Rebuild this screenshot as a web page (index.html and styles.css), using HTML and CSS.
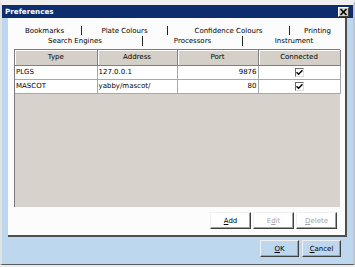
FILE: index.html
```html
<!DOCTYPE html>
<html>
<head>
<meta charset="utf-8">
<link rel="stylesheet" href="styles.css">
</head>
<body>
<div class="win">
  <div class="title">
    <span class="title-text">Preferences</span>
    <span class="close"><svg width="9" height="8" viewBox="0 0 9 8"><path d="M1.5 1 L7.5 7 M7.5 1 L1.5 7" stroke="#000" stroke-width="1.6"/></svg></span>
  </div>
  <div class="client">
    <div class="tabctl">
      <div class="tabrow">
        <div class="tab t-bm">Bookmarks</div>
        <div class="tab t-pc">Plate Colours</div>
        <div class="tab t-cc">Confidence Colours</div>
        <div class="tab t-pr last">Printing</div>
      </div>
      <div class="tabrow">
        <div class="tab t-se">Search Engines</div>
        <div class="tab t-proc">Processors</div>
        <div class="tab t-in last">Instrument</div>
      </div>
      <div class="page">
        <div class="grid">
          <table>
            <thead>
              <tr><th class="c1">Type</th><th class="c2">Address</th><th class="c3">Port</th><th class="c4">Connected</th></tr>
            </thead>
            <tbody>
              <tr><td>PLGS</td><td>127.0.0.1</td><td class="num">9876</td><td class="chk"><span class="cb"><svg width="7" height="7" viewBox="0 0 7 7"><path d="M0.5 3.2 L2.6 5.3 L6.5 1.2" fill="none" stroke="#000" stroke-width="1.5"/></svg></span></td></tr>
              <tr><td>MASCOT</td><td>yabby/mascot/</td><td class="num">80</td><td class="chk"><span class="cb"><svg width="7" height="7" viewBox="0 0 7 7"><path d="M0.5 3.2 L2.6 5.3 L6.5 1.2" fill="none" stroke="#000" stroke-width="1.5"/></svg></span></td></tr>
            </tbody>
          </table>
        </div>
        <div class="btnrow">
          <button class="btn"><u>A</u>dd</button>
          <button class="btn disabled">E<u>d</u>it</button>
          <button class="btn disabled"><u>D</u>elete</button>
        </div>
      </div>
    </div>
    <div class="dlgrow">
      <button class="btn blue"><u>O</u>K</button>
      <button class="btn blue"><u>C</u>ancel</button>
    </div>
  </div>
</div>
</body>
</html>
```

FILE: styles.css
```css
* { box-sizing: border-box; }
html, body { margin: 0; padding: 0; }
body {
  width: 355px;
  height: 267px;
  background: #ececec;
  font-family: "DejaVu Sans", "Liberation Sans", sans-serif;
  font-size: 7px;
  color: #000;
  overflow: hidden;
}
.win {
  width: 355px;
  height: 265px;
  background: #bdd7ef;
  border-top: 5px solid #efefef;
  border-left: 2px solid #e2e2e2;
  border-right: 2px solid #c4c4c4;
  border-bottom: 1px solid #5c5c5c;
  display: flex;
  flex-direction: column;
}
.title {
  height: 13px;
  background: #0e2d6e;
  display: flex;
  align-items: center;
  justify-content: space-between;
  padding: 0 4px 0 3px;
}
.title-text {
  color: #fff;
  font-weight: bold;
  font-size: 7.2px;
}
.close {
  width: 11px;
  height: 10px;
  background: #d4d0c8;
  border: 1px solid;
  border-color: #fff #404040 #404040 #fff;
  display: flex;
  align-items: center;
  justify-content: center;
}
.client {
  flex: 1;
  padding: 0 6px;
  display: flex;
  flex-direction: column;
}
.tabctl {
  height: 219px;
  background: #fcfcfc;
  border-right: 2px solid #4e4e4e;
  border-bottom: 2px solid #4e4e4e;
  padding-top: 8px;
  display: flex;
  flex-direction: column;
}
.tabrow {
  display: flex;
  height: 10px;
}
.tab {
  height: 9px;
  line-height: 10px;
  text-align: center;
  border-right: 1px solid #222;
  white-space: nowrap;
}
.tab.last { border-right: none; }
.t-bm { width: 74px; }
.t-pc { width: 86px; }
.t-cc { width: 122px; }
.t-pr { width: 55px; }
.t-se { width: 135px; }
.t-proc { width: 100px; }
.t-in { width: 102px; }
.tabrow + .tabrow .tab { height: 10px; }
.page {
  padding: 3px 0 0 6px;
  display: flex;
  flex-direction: column;
}
.grid {
  width: 326px;
  height: 158px;
  background: #d7d3cc;
  border-top: 1px solid #7a7a7a;
  border-left: 1px solid #7a7a7a;
}
table {
  border-collapse: collapse;
  table-layout: fixed;
  width: 325px;
}
th {
  height: 15px;
  padding: 0;
  font-weight: normal;
  background: #d4d0c8;
  border-right: 1px solid #808080;
  border-bottom: 1px solid #808080;
  box-shadow: inset 1px 1px 0 #fff;
  text-align: center;
}
.c1 { width: 82px; }
.c2 { width: 80px; }
.c3 { width: 81px; }
.c4 { width: 82px; }
td {
  height: 14px;
  padding: 0 1px;
  background: #fff;
  border: 1px solid #a8a8a8;
  border-top: none;
  white-space: nowrap;
  overflow: hidden;
}
td:first-child { border-left: none; }
td.num { text-align: right; }
td.chk { text-align: center; }
.cb {
  display: inline-flex;
  width: 9px;
  height: 9px;
  vertical-align: middle;
  background: #fff;
  border: 1px solid;
  border-color: #6a6a6a #e0e0e0 #e0e0e0 #6a6a6a;
  align-items: center;
  justify-content: center;
}
.btnrow {
  display: flex;
  justify-content: flex-end;
  gap: 2px;
  margin-top: 5px;
  padding-right: 8px;
}
.btn {
  width: 41px;
  height: 17px;
  padding: 0;
  font-family: inherit;
  font-size: 7px;
  color: #000;
  background: #fff;
  border: 1px solid;
  border-color: #f0f0f0 #404040 #404040 #f0f0f0;
  box-shadow: inset -1px -1px 0 #a0a0a0;
}
.btn.disabled { color: #a6a6a6; }
.dlgrow {
  display: flex;
  justify-content: flex-end;
  gap: 3px;
  padding: 3px 6px 0 0;
}
.btn.blue {
  background: #bdd7ef;
  width: 39px;
}
```
